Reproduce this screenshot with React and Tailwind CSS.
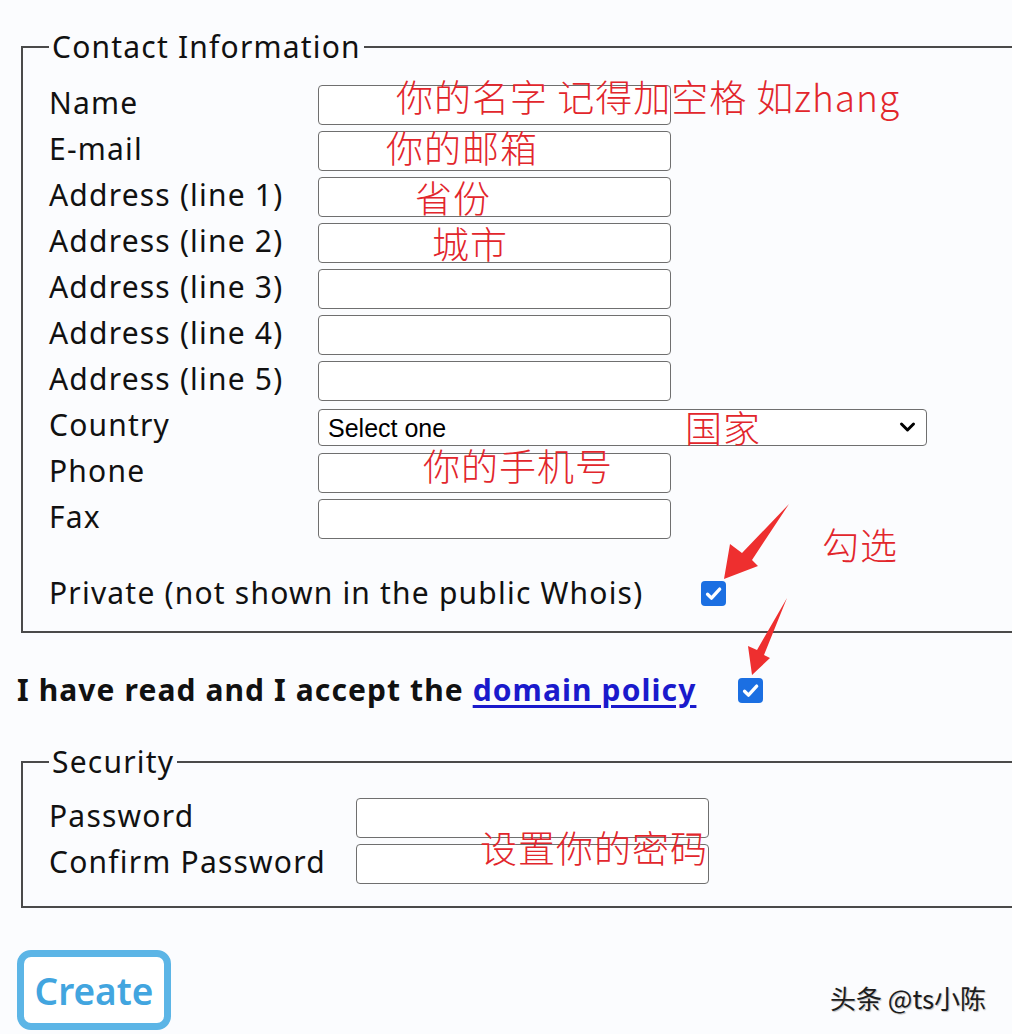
import React from 'react';

const rows = [
  { label: 'Name' },
  { label: 'E-mail' },
  { label: 'Address (line 1)' },
  { label: 'Address (line 2)' },
  { label: 'Address (line 3)' },
  { label: 'Address (line 4)' },
  { label: 'Address (line 5)' },
  { label: 'Country', select: true },
  { label: 'Phone' },
  { label: 'Fax' },
];

const notes = [
  { text: '你的名字 记得加空格 如zhang', cls: 'left-[396px] top-[78px]' },
  { text: '你的邮箱', cls: 'left-[386px] top-[129px]' },
  { text: '省份', cls: 'left-[415px] top-[179px]' },
  { text: '城市', cls: 'left-[432px] top-[225px]' },
  { text: '国家', cls: 'left-[685px] top-[409px]' },
  { text: '你的手机号', cls: 'left-[423px] top-[447px]' },
  { text: '勾选', cls: 'left-[822px] top-[526px]' },
  { text: '设置你的密码', cls: 'left-[480px] top-[829px]' },
];

const Check = () => (
  <span className="w-[25px] h-[25px] rounded-[4px] bg-[#1b6fe2] flex items-center justify-center shrink-0">
    <svg width="19" height="19" viewBox="0 0 16 16" fill="none">
      <path d="M3 8.6l3.3 3.3L13.2 4.3" stroke="#fff" strokeWidth="2.8" strokeLinecap="round" strokeLinejoin="round" />
    </svg>
  </span>
);

const TextInput = () => (
  <input type="text" className="w-[353px] h-[40px] border border-[#6f6f6f] rounded-[4px] bg-white px-2 outline-none" />
);

export default function App() {
  return (
    <div className="relative w-[1012px] h-[1034px] overflow-hidden bg-[#fbfcfe] pt-[32px] text-[#111] tracking-[1.2px] font-['Noto_Sans','Liberation_Sans',sans-serif]">
      <fieldset className="ml-[21px] w-[1000px] border-2 border-[#4a4a4a] pl-[26px] pt-[20px] pb-[23px]">
        <legend className="px-[3px] text-[30px] leading-[30px]">Contact Information</legend>
        {rows.map((r) => (
          <div key={r.label} className="h-[46px] flex items-center">
            <span className="w-[269px] shrink-0 text-[30px] leading-[30px] -mt-[4px]">{r.label}</span>
            {r.select ? (
              <div className="relative">
                <select className="appearance-none w-[609px] h-[37px] border border-[#6f6f6f] rounded-[4px] bg-white pl-[9px] text-[25px] tracking-normal text-black font-['Liberation_Sans',Arial,sans-serif] outline-none">
                  <option>Select one</option>
                </select>
                <svg className="absolute right-[11px] top-[11px] pointer-events-none" width="17" height="14" viewBox="0 0 17 14" fill="none">
                  <path d="M2.5 4l6 6 6-6" stroke="#000" strokeWidth="3" strokeLinecap="round" strokeLinejoin="round" />
                </svg>
              </div>
            ) : (
              <TextInput />
            )}
          </div>
        ))}
        <div className="mt-[36px] h-[30px] flex items-center">
          <span className="w-[652px] shrink-0 text-[30px] leading-[30px]">Private (not shown in the public Whois)</span>
          <Check />
        </div>
      </fieldset>

      <div className="mt-[42px] pl-[17px] h-[30px] flex items-center">
        <span className="text-[30px] leading-[30px] font-bold tracking-[1.1px]">
          I have read and I accept the{' '}
          <a href="#" className="text-[#1a1acc] underline underline-offset-[4px]">domain policy</a>
        </span>
        <span className="ml-[42px]">
          <Check />
        </span>
      </div>

      <fieldset className="mt-[42px] ml-[21px] w-[1000px] border-2 border-[#4a4a4a] pl-[26px] pt-[18px] pb-[19px]">
        <legend className="px-[3px] text-[30px] leading-[30px]">Security</legend>
        {['Password', 'Confirm Password'].map((l) => (
          <div key={l} className="h-[46px] flex items-center">
            <span className="w-[307px] shrink-0 text-[30px] leading-[30px] -mt-[4px]">{l}</span>
            <TextInput />
          </div>
        ))}
      </fieldset>

      <button className="mt-[42px] ml-[17px] w-[154px] h-[80px] border-[7px] border-[#5cb5e6] rounded-[14px] bg-white text-[37px] leading-none tracking-normal font-semibold text-[#42a5df] flex items-center justify-center">
        Create
      </button>

      {notes.map((n) => (
        <span
          key={n.text}
          className={`absolute ${n.cls} text-[37px] leading-[37px] tracking-[1px] font-light whitespace-nowrap text-[#e2262c] font-['Noto_Sans_CJK_SC','Noto_Sans',sans-serif] pointer-events-none`}
        >
          {n.text}
        </span>
      ))}

      <svg className="absolute left-0 top-0 pointer-events-none" width="1012" height="1034">
        <polygon points="724,579 730,544 742,553 789,504 752,560 758,566" fill="#ee2f2f" />
        <polygon points="752,675 748,646 757,650 787,598 764,655 770,658" fill="#ee2f2f" />
      </svg>

      <span className="absolute left-[830px] top-[984px] text-[26px] leading-[28px] tracking-normal text-[#1d1d1d] [text-shadow:1px_1px_1px_rgba(0,0,0,0.25)] font-['Noto_Sans_CJK_SC','Noto_Sans',sans-serif]">
        头条 @ts小陈
      </span>
    </div>
  );
}
